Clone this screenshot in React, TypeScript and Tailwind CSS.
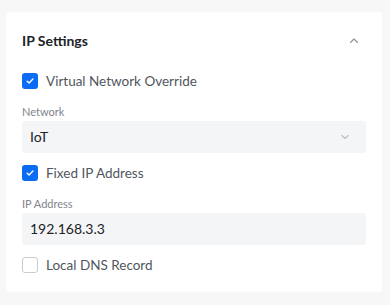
import React, { useState } from 'react';

const Check = ({ checked, onChange, label }: { checked: boolean; onChange: () => void; label: string }) => (
  <label className="flex h-5 items-center gap-2 cursor-pointer" onClick={onChange}>
    <span
      className={
        checked
          ? 'flex h-4 w-4 items-center justify-center rounded-[3px] bg-[#0a6cf5]'
          : 'flex h-4 w-4 items-center justify-center rounded-[3px] border border-[#c9ccd1] bg-white'
      }
    >
      {checked && (
        <svg width="10" height="10" viewBox="0 0 10 10" fill="none">
          <path d="M2.2 5.2l1.9 1.9 3.8-4" stroke="white" strokeWidth="1.4" strokeLinecap="round" strokeLinejoin="round" />
        </svg>
      )}
    </span>
    <span className="text-[13.5px] leading-5 text-[#50565e]">{label}</span>
  </label>
);

export default function App() {
  const [vno, setVno] = useState(true);
  const [fixed, setFixed] = useState(true);
  const [dns, setDns] = useState(false);

  return (
    <div className="h-[305px] w-[390px] bg-[#f7f7f8] pt-3 pl-1.5 pr-2" style={{ fontFamily: 'Lato, "Noto Sans", sans-serif' }}>
      <div className="rounded-[4px] bg-white px-4 pt-[19px] pb-[17px]">
        <div className="flex h-5 items-center justify-between">
          <h2 className="text-[14px] leading-5 font-bold text-[#212327]">IP Settings</h2>
          <svg width="12" height="12" viewBox="0 0 12 12" fill="none" className="mr-[6px]">
            <path d="M2.5 7.5L6 4l3.5 3.5" stroke="#8a8f96" strokeWidth="1.1" strokeLinecap="round" strokeLinejoin="round" />
          </svg>
        </div>

        <div className="mt-5">
          <Check checked={vno} onChange={() => setVno(!vno)} label="Virtual Network Override" />
        </div>

        <div className="mt-[13px]">
          <div className="text-[11px] text-[#80858c] leading-4">Network</div>
          <div className="mt-px flex h-8 items-center justify-between rounded-[3px] bg-[#f4f5f6] pl-2 pr-4">
            <span className="text-[14px] leading-5 text-[#212327]">IoT</span>
            <svg width="10" height="10" viewBox="0 0 10 10" fill="none">
              <path d="M2 3.5L5 6.5l3-3" stroke="#b9bdc2" strokeWidth="1.1" strokeLinecap="round" strokeLinejoin="round" />
            </svg>
          </div>
        </div>

        <div className="mt-[10px]">
          <Check checked={fixed} onChange={() => setFixed(!fixed)} label="Fixed IP Address" />
        </div>

        <div className="mt-[13px]">
          <div className="text-[11px] text-[#80858c] leading-4">IP Address</div>
          <div className="mt-px flex h-8 items-center rounded-[3px] bg-[#f4f5f6] pl-2">
            <span className="text-[14px] leading-5 text-[#212327]">192.168.3.3</span>
          </div>
        </div>

        <div className="mt-[10px]">
          <Check checked={dns} onChange={() => setDns(!dns)} label="Local DNS Record" />
        </div>
      </div>
    </div>
  );
}
